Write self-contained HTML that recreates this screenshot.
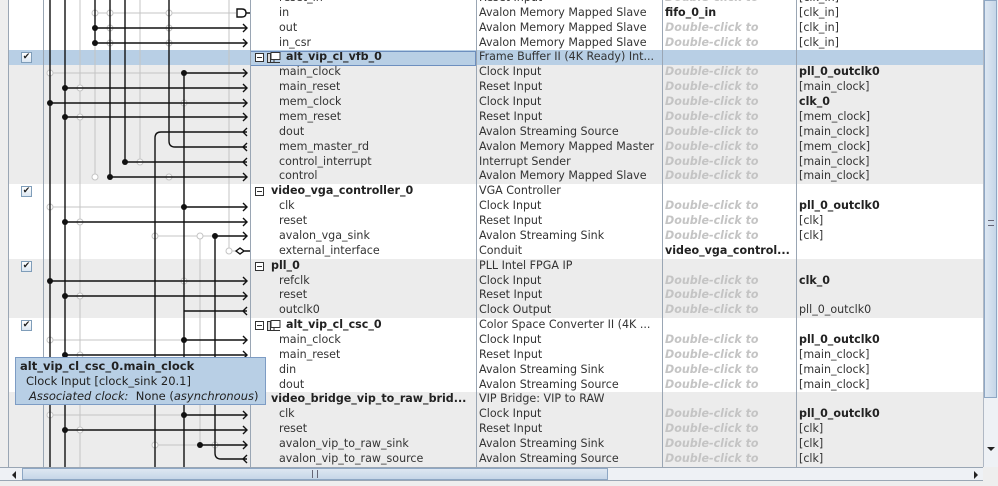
<!DOCTYPE html>
<html><head><meta charset="utf-8"><style>
*{margin:0;padding:0;box-sizing:border-box}
body{width:998px;height:486px;overflow:hidden;background:#eeeeee;position:relative;font-family:"DejaVu Sans","Liberation Sans",sans-serif;font-size:11.1px;color:#333}
.r{position:absolute;left:8px;width:975px;height:14.87px;line-height:14.87px;white-space:nowrap}
.w{background:#fff}.g{background:#ececec}.s{background:#b8cfe5}
.r span{position:absolute;top:0;overflow:hidden}
.n{left:271px}.h{left:263px;font-weight:bold;color:#222}.d{left:471px;width:184px}.e{left:657px;width:132px}.c{left:791px}
.dc{color:#c4c4c4;font-style:italic;font-weight:bold}
b{color:#222}
.cb{position:absolute;left:13px;top:2px;width:11px;height:11px;border:1px solid #7f9db9;background:linear-gradient(#fff,#dbe6f1);font-size:9px;line-height:9px;text-align:center;color:#222}
.mx{position:absolute;left:247px;top:3px;width:9px;height:9px;border:1px solid #333;background:#fff}
.mx:after{content:"";position:absolute;left:1px;top:3px;width:5px;height:1px;background:#333}
.ic{position:absolute;left:259px;top:2px;width:14px;height:12px}
.vl{position:absolute;top:0;height:467px;width:1px;background:#9aa6b4}
</style></head><body>
<div class="r w" style="top:-9px"><span class="n">reset_in</span><span class="d">Reset Input</span><span class="e dc">Double-click to</span><span class="c">[clk_in]</span></div>
<div class="r w" style="top:5.87px"><span class="n">in</span><span class="d">Avalon Memory Mapped Slave</span><span class="e"><b>fifo_0_in</b></span><span class="c">[clk_in]</span></div>
<div class="r w" style="top:20.74px"><span class="n">out</span><span class="d">Avalon Memory Mapped Slave</span><span class="e dc">Double-click to</span><span class="c">[clk_in]</span></div>
<div class="r w" style="top:35.61px"><span class="n">in_csr</span><span class="d">Avalon Memory Mapped Slave</span><span class="e dc">Double-click to</span><span class="c">[clk_in]</span></div>
<div class="r s" style="top:50.48px"><div class="cb">✔</div><div class="mx"></div><svg class="ic" viewBox="0 0 14 12"><rect x="4" y="0.5" width="9" height="7" fill="#fff" stroke="#333"/><rect x="0.5" y="1.5" width="3" height="9" fill="#ddd" stroke="#333"/><path d="M4 10.5H13M7 8V10" stroke="#333"/></svg><span class="h" style="left:278px">alt_vip_cl_vfb_0</span><span class="d">Frame Buffer II (4K Ready) Int...</span></div>
<div class="r g" style="top:65.35px"><span class="n">main_clock</span><span class="d">Clock Input</span><span class="e dc">Double-click to</span><span class="c"><b>pll_0_outclk0</b></span></div>
<div class="r g" style="top:80.22px"><span class="n">main_reset</span><span class="d">Reset Input</span><span class="e dc">Double-click to</span><span class="c">[main_clock]</span></div>
<div class="r g" style="top:95.09px"><span class="n">mem_clock</span><span class="d">Clock Input</span><span class="e dc">Double-click to</span><span class="c"><b>clk_0</b></span></div>
<div class="r g" style="top:109.96px"><span class="n">mem_reset</span><span class="d">Reset Input</span><span class="e dc">Double-click to</span><span class="c">[mem_clock]</span></div>
<div class="r g" style="top:124.83px"><span class="n">dout</span><span class="d">Avalon Streaming Source</span><span class="e dc">Double-click to</span><span class="c">[main_clock]</span></div>
<div class="r g" style="top:139.7px"><span class="n">mem_master_rd</span><span class="d">Avalon Memory Mapped Master</span><span class="e dc">Double-click to</span><span class="c">[mem_clock]</span></div>
<div class="r g" style="top:154.57px"><span class="n">control_interrupt</span><span class="d">Interrupt Sender</span><span class="e dc">Double-click to</span><span class="c">[main_clock]</span></div>
<div class="r g" style="top:169.44px"><span class="n">control</span><span class="d">Avalon Memory Mapped Slave</span><span class="e dc">Double-click to</span><span class="c">[main_clock]</span></div>
<div class="r w" style="top:184.31px"><div class="cb">✔</div><div class="mx"></div><span class="h">video_vga_controller_0</span><span class="d">VGA Controller</span></div>
<div class="r w" style="top:199.18px"><span class="n">clk</span><span class="d">Clock Input</span><span class="e dc">Double-click to</span><span class="c"><b>pll_0_outclk0</b></span></div>
<div class="r w" style="top:214.05px"><span class="n">reset</span><span class="d">Reset Input</span><span class="e dc">Double-click to</span><span class="c">[clk]</span></div>
<div class="r w" style="top:228.92px"><span class="n">avalon_vga_sink</span><span class="d">Avalon Streaming Sink</span><span class="e dc">Double-click to</span><span class="c">[clk]</span></div>
<div class="r w" style="top:243.79px"><span class="n">external_interface</span><span class="d">Conduit</span><span class="e"><b>video_vga_control...</b></span></div>
<div class="r g" style="top:258.66px"><div class="cb">✔</div><div class="mx"></div><span class="h">pll_0</span><span class="d">PLL Intel FPGA IP</span></div>
<div class="r g" style="top:273.53px"><span class="n">refclk</span><span class="d">Clock Input</span><span class="e dc">Double-click to</span><span class="c"><b>clk_0</b></span></div>
<div class="r g" style="top:288.4px"><span class="n">reset</span><span class="d">Reset Input</span><span class="e dc">Double-click to</span></div>
<div class="r g" style="top:303.27px"><span class="n">outclk0</span><span class="d">Clock Output</span><span class="e dc">Double-click to</span><span class="c">pll_0_outclk0</span></div>
<div class="r w" style="top:318.14px"><div class="cb">✔</div><div class="mx"></div><svg class="ic" viewBox="0 0 14 12"><rect x="4" y="0.5" width="9" height="7" fill="#fff" stroke="#333"/><rect x="0.5" y="1.5" width="3" height="9" fill="#ddd" stroke="#333"/><path d="M4 10.5H13M7 8V10" stroke="#333"/></svg><span class="h" style="left:278px">alt_vip_cl_csc_0</span><span class="d">Color Space Converter II (4K ...</span></div>
<div class="r w" style="top:333.01px"><span class="n">main_clock</span><span class="d">Clock Input</span><span class="e dc">Double-click to</span><span class="c"><b>pll_0_outclk0</b></span></div>
<div class="r w" style="top:347.88px"><span class="n">main_reset</span><span class="d">Reset Input</span><span class="e dc">Double-click to</span><span class="c">[main_clock]</span></div>
<div class="r w" style="top:362.75px"><span class="n">din</span><span class="d">Avalon Streaming Sink</span><span class="e dc">Double-click to</span><span class="c">[main_clock]</span></div>
<div class="r w" style="top:377.62px"><span class="n">dout</span><span class="d">Avalon Streaming Source</span><span class="e dc">Double-click to</span><span class="c">[main_clock]</span></div>
<div class="r g" style="top:392.49px"><div class="cb">✔</div><div class="mx"></div><span class="h">video_bridge_vip_to_raw_brid...</span><span class="d">VIP Bridge: VIP to RAW</span></div>
<div class="r g" style="top:407.36px"><span class="n">clk</span><span class="d">Clock Input</span><span class="e dc">Double-click to</span><span class="c"><b>pll_0_outclk0</b></span></div>
<div class="r g" style="top:422.23px"><span class="n">reset</span><span class="d">Reset Input</span><span class="e dc">Double-click to</span><span class="c">[clk]</span></div>
<div class="r g" style="top:437.1px"><span class="n">avalon_vip_to_raw_sink</span><span class="d">Avalon Streaming Sink</span><span class="e dc">Double-click to</span><span class="c">[clk]</span></div>
<div class="r g" style="top:451.97px"><span class="n">avalon_vip_to_raw_source</span><span class="d">Avalon Streaming Source</span><span class="e dc">Double-click to</span><span class="c">[clk]</span></div>
<div style="position:absolute;left:250px;top:50.5px;width:226px;height:15px;border:1px solid #6d8fbf"></div>
<div class="vl" style="left:8px"></div><div class="vl" style="left:43px"></div><div class="vl" style="left:250px"></div><div class="vl" style="left:476px"></div><div class="vl" style="left:662px"></div><div class="vl" style="left:796px"></div>
<svg style="position:absolute;left:0;top:0" width="998" height="486">
<g stroke="#c4c4c4" stroke-width="1" fill="none">
<path d="M80 0V467M140 0V162M95 43V177M229 0V251M200 236V445M155 420V445"/>
<path d="M95 13H236M50 73H184M184 103H50M50 207H184M155 236H215M229 251H236M184 281H50M50 340H184M50 415H184M155 445H200"/>
</g>
<g stroke="#c4c4c4" fill="#fff">
<circle cx="95" cy="13" r="3"/><circle cx="110" cy="13" r="3"/><circle cx="169" cy="13" r="3"/>
<circle cx="110" cy="28" r="3"/><circle cx="169" cy="28" r="3"/><circle cx="110" cy="43" r="3"/><circle cx="169" cy="43" r="3"/>
<circle cx="50" cy="73" r="3"/><circle cx="80" cy="88" r="3"/><circle cx="184" cy="103" r="3"/><circle cx="80" cy="117" r="3"/>
<circle cx="140" cy="162" r="3"/><circle cx="95" cy="177" r="3"/><circle cx="169" cy="177" r="3"/>
<circle cx="50" cy="207" r="3"/><circle cx="80" cy="222" r="3"/><circle cx="155" cy="236" r="3"/><circle cx="200" cy="236" r="3"/><circle cx="229" cy="251" r="3"/>
<circle cx="184" cy="281" r="3"/><circle cx="80" cy="296" r="3"/><circle cx="50" cy="340" r="3"/><circle cx="80" cy="355" r="3"/>
<circle cx="50" cy="415" r="3"/><circle cx="80" cy="430" r="3"/><circle cx="155" cy="445" r="3"/><circle cx="215" cy="445" r="3"/>
</g>
<g stroke="#111" stroke-width="1.4" fill="none">
<path d="M50 0V467M65 0V467M95 0V43M110 0V177M125 0V162M169 0V141Q169 147 175 147H247M155 467V138Q155 132 161 132H247M184 73V467M215 236V453Q215 459 221 459H247"/>
<path d="M95 28H247M95 43H247M184 73H247M65 88H247M50 103H247M65 117H247M125 162H247M110 177H247M184 207H247M65 222H247M215 236H247M50 281H247M65 296H247M184 311H247M184 340H247M65 355H247M184 415H247M65 430H247M200 445H247"/>
<path d="M243 24L247 28L243 32M243 39L247 43L243 47M243 69L247 73L243 77M243 84L247 88L243 92M243 99L247 103L243 107M243 113L247 117L243 121M247 128L243 132L247 136M247 143L243 147L247 151M247 158L243 162L247 166M243 173L247 177L243 181M243 203L247 207L243 211M243 218L247 222L243 226M243 232L247 236L243 240M243 277L247 281L243 285M243 292L247 296L243 300M247 307L243 311L247 315M243 336L247 340L243 344M243 351L247 355L243 359M243 411L247 415L243 419M243 426L247 430L243 434M243 441L247 445L243 449M247 455L243 459L247 463"/>
<path d="M237 9H242Q246 9 246 13Q246 17 242 17H237ZM246 13H250M236 251L240 248L244 251L240 254ZM244 251H250"/>
</g>
<g fill="#111"><circle cx="95" cy="28" r="3"/><circle cx="95" cy="43" r="3"/><circle cx="184" cy="73" r="3"/><circle cx="65" cy="88" r="3"/><circle cx="50" cy="103" r="3"/><circle cx="65" cy="117" r="3"/><circle cx="125" cy="162" r="3"/><circle cx="110" cy="177" r="3"/><circle cx="184" cy="207" r="3"/><circle cx="65" cy="222" r="3"/><circle cx="215" cy="236" r="3"/><circle cx="50" cy="281" r="3"/><circle cx="65" cy="296" r="3"/><circle cx="184" cy="340" r="3"/><circle cx="65" cy="355" r="3"/><circle cx="184" cy="415" r="3"/><circle cx="65" cy="430" r="3"/><circle cx="200" cy="445" r="3"/></g>
</svg>
<div style="position:absolute;left:983px;top:0;width:15px;height:467px;background:#eef1f5;border-left:1px solid #b0b8c4"></div>
<div style="position:absolute;left:984px;top:0;width:13px;height:398px;background:linear-gradient(90deg,#dde7f2,#c6d6e8);border:1px solid #8ea7c4"></div>
<div style="position:absolute;left:988px;top:220px;width:6px;height:6px;border-top:1px solid #667;border-bottom:1px solid #667"></div>
<div style="position:absolute;left:987px;top:447px;width:0;height:0;border-left:4px solid transparent;border-right:4px solid transparent;border-top:4px solid #222"></div>
<div style="position:absolute;left:0;top:467px;width:983px;height:14px;background:#eef1f5;border-top:1px solid #9aa6b4;border-bottom:1px solid #9aa6b4"></div>
<div style="position:absolute;left:12px;top:471px;width:0;height:0;border-top:4px solid transparent;border-bottom:4px solid transparent;border-right:4px solid #222"></div>
<div style="position:absolute;left:974px;top:471px;width:0;height:0;border-top:4px solid transparent;border-bottom:4px solid transparent;border-left:4px solid #222"></div>
<div style="position:absolute;left:22px;top:468px;width:586px;height:12px;background:linear-gradient(#dde7f2,#c6d6e8);border:1px solid #8ea7c4"></div>
<div style="position:absolute;left:312px;top:470px;width:6px;height:8px;border-left:1px solid #667;border-right:1px solid #667"></div>
<div style="position:absolute;left:15px;top:357px;width:251px;height:48px;background:#b8cfe5;border:1px solid #7d9cc4;padding:1px 4px;line-height:15px;color:#222;white-space:nowrap;font-size:11.5px">
<div style="font-weight:bold">alt_vip_cl_csc_0.main_clock</div>
<div style="padding-left:6px">Clock Input [clock_sink 20.1]</div>
<div style="padding-left:9px"><i>Associated clock:</i>&nbsp; None (<i>asynchronous</i>)</div>
</div>
</body></html>
